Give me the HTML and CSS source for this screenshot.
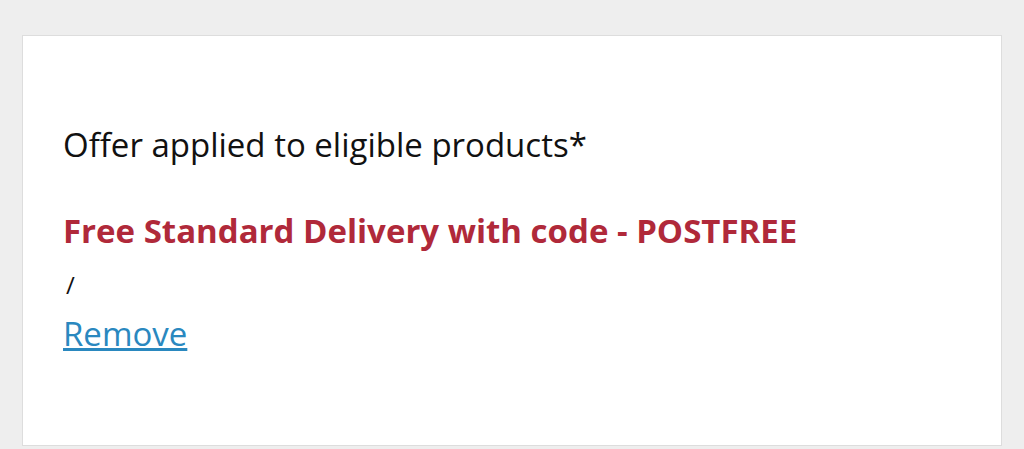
FILE: index.html
```html
<!DOCTYPE html>
<html>
<head>
<meta charset="UTF-8">
<title>Offer</title>
<link rel="stylesheet" href="styles.css">
</head>
<body>
	<div class="offerBox">
		<p class="offerNote">Offer applied to eligible products*</p>
		<p class="offerTitle">Free Standard Delivery with code - POSTFREE</p>
		<span class="offerSep">/</span>
		<a class="offerRemove" href="#">Remove</a>
	</div>
</body>
</html>
```

FILE: styles.css
```css
html, body {
	margin: 0;
	background-color: #eeeeee;
}

body {
	padding: 35px 22px 0 22px;
	font-family: "Open Sans", "Liberation Sans", sans-serif;
	color: #111111;
}

.offerBox {
	background-color: #ffffff;
	border: 1px solid #dddddd;
	height: 411px;
	box-sizing: border-box;
	padding: 89px 40px 0 40px;
}

.offerNote {
	margin: 0 0 46px 0;
	font-size: 33px;
	line-height: 40px;
}

.offerTitle {
	margin: 0;
	font-size: 33px;
	line-height: 40px;
	font-weight: bold;
	color: #b0293a;
}

.offerSep {
	display: block;
	margin-top: 14px;
	font-size: 24px;
	line-height: 40px;
	padding-left: 3px;
}

.offerRemove {
	display: inline-block;
	margin-top: 9px;
	font-size: 33px;
	line-height: 40px;
	color: #2a88bf;
}
```
